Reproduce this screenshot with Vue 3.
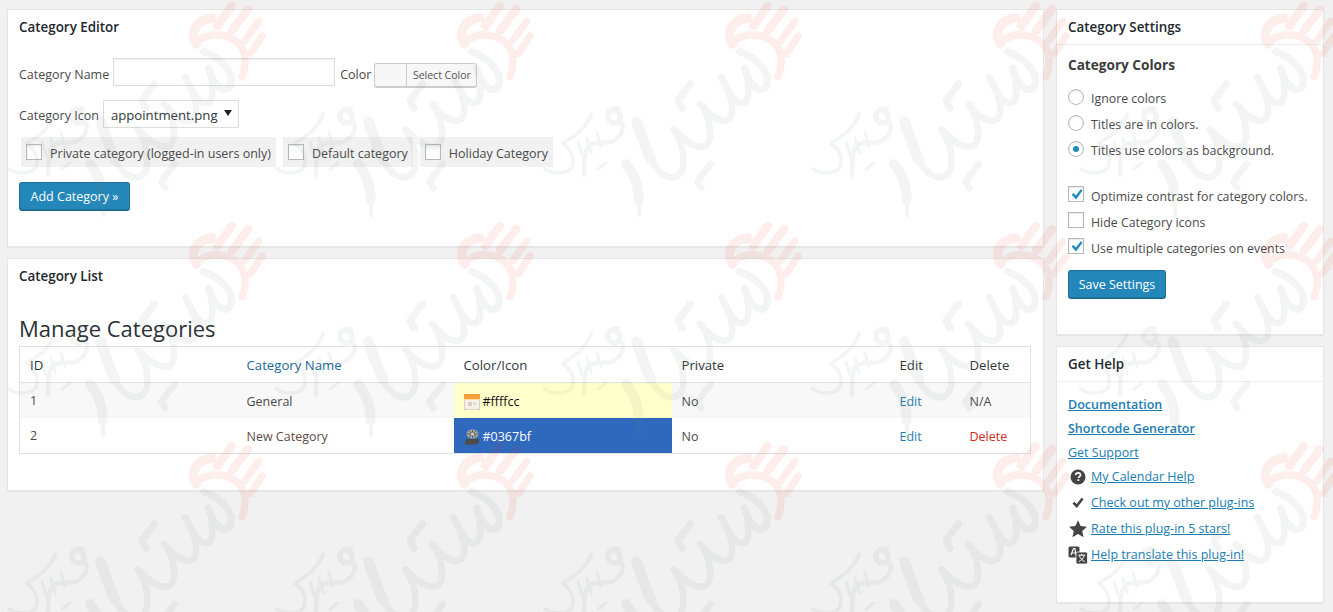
<script setup>
const radios = [
  { label: 'Ignore colors', on: false },
  { label: 'Titles are in colors.', on: false },
  { label: 'Titles use colors as background.', on: true },
];

const options = [
  { label: 'Optimize contrast for category colors.', on: true },
  { label: 'Hide Category icons', on: false },
  { label: 'Use multiple categories on events', on: true },
];

const flags = ['Private category (logged-in users only)', 'Default category', 'Holiday Category'];
</script>

<template>
  <div class="page">
    <main class="main-col">
      <section class="panel editor">
        <h2 class="bare-title">Category Editor</h2>
        <div class="row name-row">
          <label class="field-label">Category Name</label>
          <input class="text-input" type="text" />
          <label class="field-label color-label">Color</label>
          <span class="color-btn"><span class="swatch"></span><span class="pick">Select Color</span></span>
        </div>
        <div class="row icon-row">
          <label class="icon-label">Category Icon</label>
          <span class="select-wrap">
            <select class="icon-select">
              <option>appointment.png</option>
            </select>
          </span>
        </div>
        <div class="flags">
          <label v-for="flag in flags" :key="flag" class="flag">
            <span class="box"></span>
            <span>{{ flag }}</span>
          </label>
        </div>
        <button class="wp-btn add-btn">Add Category »</button>
      </section>

      <section class="panel list">
        <h2 class="bare-title">Category List</h2>
        <h1 class="manage">Manage Categories</h1>
        <table class="cats">
          <thead>
            <tr>
              <th class="c-id">ID</th>
              <th class="c-name"><a>Category Name</a></th>
              <th class="c-color">Color/Icon</th>
              <th class="c-private">Private</th>
              <th class="c-edit">Edit</th>
              <th class="c-del">Delete</th>
            </tr>
          </thead>
          <tbody>
            <tr class="odd">
              <td class="id-cell">1</td>
              <td class="name-cell">General</td>
              <td class="light-cell">
                <span class="color-wrap">
                  <svg width="16" height="16" viewBox="0 0 16 16">
                    <rect x="0.5" y="0.5" width="15" height="15" fill="#f6f1e8" stroke="#d8d2c6" />
                    <rect x="0" y="0" width="16" height="5" fill="#f5a13c" />
                    <rect x="0" y="5" width="16" height="1" fill="#fbd9a6" />
                    <rect x="4" y="8" width="4" height="4" fill="#e8c8c0" />
                    <rect x="9" y="8" width="3" height="3" fill="#d9dde6" />
                  </svg>
                  #ffffcc
                </span>
              </td>
              <td>No</td>
              <td><a class="edit">Edit</a></td>
              <td>N/A</td>
            </tr>
            <tr>
              <td class="id-cell">2</td>
              <td class="name-cell new-cat">New Category</td>
              <td class="blue-cell">
                <span class="color-wrap">
                  <svg width="16" height="16" viewBox="0 0 16 16">
                    <path d="M0.500 15.500l1.500-5.500h13v2.500l-2 3z" fill="#4e4c48" />
                    <ellipse cx="8.500" cy="5" rx="6" ry="4.500" fill="#a9a9a4" />
                    <path d="M8.500 1v8M3 5h11M5 2l7 6M12 2L5 8" stroke="#5a5a56" stroke-width="1" />
                    <circle cx="8.500" cy="5" r="1.500" fill="#d2d2cc" />
                  </svg>
                  #0367bf
                </span>
              </td>
              <td>No</td>
              <td><a class="edit">Edit</a></td>
              <td><a class="del">Delete</a></td>
            </tr>
          </tbody>
        </table>
      </section>
    </main>

    <aside class="side-col">
      <section class="panel settings">
        <h2 class="side-title">Category Settings</h2>
        <div class="side-body">
          <h3 class="sub-title">Category Colors</h3>
          <ul class="radio-list">
            <li v-for="r in radios" :key="r.label">
              <span class="radio" :class="{ on: r.on }"></span>
              <span>{{ r.label }}</span>
            </li>
          </ul>
          <ul class="check-list">
            <li v-for="o in options" :key="o.label">
              <span class="box">
                <svg v-if="o.on" width="16" height="16" viewBox="0 0 16 16">
                  <path d="M2.600 7.600l1.700-1.700 2.500 2.500 5-6.200 1.800 1.400-6.600 8.800z" fill="#1e8cbe" />
                </svg>
              </span>
              <span>{{ o.label }}</span>
            </li>
          </ul>
          <button class="wp-btn save-btn">Save Settings</button>
        </div>
      </section>

      <section class="panel help">
        <h2 class="side-title">Get Help</h2>
        <div class="side-body help-body">
          <a class="strong">Documentation</a>
          <a class="strong">Shortcode Generator</a>
          <a>Get Support</a>
          <div class="help-links">
            <div class="help-row">
              <svg width="20" height="20" viewBox="0 0 20 20">
                <circle cx="10" cy="10" r="7.500" fill="#444" />
                <path d="M7.600 8.100c.1-1.500 1.100-2.200 2.500-2.200s2.400.8 2.400 2c0 1.700-2 1.600-2 3.200" fill="none" stroke="#fff" stroke-width="1.700" />
                <rect x="9.500" y="12.200" width="1.800" height="1.800" fill="#fff" />
              </svg>
              <a>My Calendar Help</a>
            </div>
            <div class="help-row">
              <svg width="20" height="20" viewBox="0 0 20 20">
                <path d="M4.500 10.500l1.800-1.800 2.300 2.300 5-6.300 2 1.500-6.800 8.800z" fill="#444" />
              </svg>
              <a>Check out my other plug-ins</a>
            </div>
            <div class="help-row">
              <svg width="20" height="20" viewBox="0 0 20 20">
                <path d="M10 1.200l2.600 5.900 6.400.6-4.800 4.300 1.400 6.300L10 15.100l-5.600 3.200 1.400-6.300L1 7.700l6.400-.6z" fill="#444" />
              </svg>
              <a>Rate this plug-in 5 stars!</a>
            </div>
            <div class="help-row">
              <svg width="20" height="20" viewBox="0 0 20 20">
                <rect x="0.500" y="1.500" width="11" height="11" rx="1.500" fill="#444" />
                <path d="M3 10l2.500-6.500h1.400L8 10M3.900 8h3.400" fill="none" stroke="#fff" stroke-width="1.200" />
                <rect x="8" y="7" width="11.500" height="12" rx="1.500" fill="#444" stroke="#fff" stroke-width="0.800" />
                <path d="M10.300 10.200h7M13.800 8.800v1.400M11.300 10.600c1 3 3.400 5 5.500 6M16.300 10.600c-1 3-3.400 5-5.500 6" fill="none" stroke="#fff" stroke-width="1" />
              </svg>
              <a>Help translate this plug-in!</a>
            </div>
          </div>
        </div>
      </section>
    </aside>

    <svg class="watermark" width="1333" height="612" aria-hidden="true">
      <defs>
        <pattern id="wm" x="5" y="0" width="268" height="220" patternUnits="userSpaceOnUse">
          <g transform="translate(-69 0) scale(0.3333)" opacity="0.085" fill="none" stroke="#6e8278" stroke-linecap="round" stroke-linejoin="round">
            <path stroke-width="22" d="M803 155C850 170 895 215 885 252C875 282 838 272 818 205" />
            <path stroke-width="20" d="M818 205C838 270 832 332 792 302C772 286 758 252 748 232" />
            <path stroke-width="20" d="M752 240C792 310 790 368 750 362C722 356 702 332 684 312" />
            <path stroke-width="22" d="M655 252L618 302L630 324" />
            <path stroke-width="20" d="M690 315C722 370 722 438 692 440C652 442 624 405 604 388" />
            <path stroke-width="20" d="M606 392C642 442 648 528 602 532C572 532 552 510 536 478" />
            <path stroke-width="32" d="M536 478C520 440 505 400 494 365" />
            <path stroke-width="30" d="M462 492C490 525 500 560 500 600" />
            <path stroke-width="13" d="M500 600L502 645" />
            <path stroke-width="20" d="M716 492L676 545L688 564" />
            <path stroke-width="11" d="M358 342C338 390 305 410 272 430C296 448 310 472 300 502C285 526 240 522 218 506" />
            <path stroke-width="17" d="M438 328C410 322 395 352 420 368C448 378 452 340 430 332" />
            <path stroke-width="13" d="M452 372C456 402 432 430 395 428C372 426 350 430 342 450C336 480 336 505 336 525" />
            <path stroke-width="9" d="M375 398L387 440M345 414L358 460M318 426L332 470" />
            <path stroke-width="9" d="M402 488L378 508" />
          </g>
          <g transform="translate(175 0) scale(0.3333)" opacity="0.09" fill="none" stroke="#e63220" stroke-linecap="round" stroke-linejoin="round">
            <path stroke-width="26" d="M112 78L155 18" />
            <path stroke-width="26" d="M156 92L204 28" />
            <path stroke-width="22" d="M194 122L236 64" />
            <path stroke-width="22" d="M212 160L246 108" />
            <path stroke-width="28" d="M96 54C50 58 26 98 50 132" />
            <path stroke-width="22" d="M62 118C112 88 178 112 192 158" />
            <path stroke-width="22" d="M192 158C200 190 194 212 186 230" />
          </g>
        </pattern>
      </defs>
      <rect width="1333" height="612" fill="url(#wm)" />
    </svg>
  </div>
</template>

<style>
html,
body {
  margin: 0;
  background: #f1f1f1;
}
</style>

<style scoped>
.page {
  position: relative;
  display: flex;
  gap: 12px;
  width: 1333px;
  height: 612px;
  box-sizing: border-box;
  padding: 9px 9px 0 7px;
  overflow: hidden;
  background: #f1f1f1;
  font-family: "Open Sans", "Noto Sans", sans-serif;
  font-size: 12.5px;
  color: #4a4a4a;
}

.main-col {
  display: flex;
  flex-direction: column;
  gap: 11px;
  width: 1037px;
}

.side-col {
  display: flex;
  flex-direction: column;
  gap: 11px;
  width: 268px;
}

.panel {
  box-sizing: border-box;
  background: #fff;
  border: 1px solid #e5e5e5;
  box-shadow: 0 1px 1px rgba(0, 0, 0, 0.04);
}

.editor {
  height: 238px;
  padding: 0 10px;
}

.list {
  height: 233px;
  padding: 0 10px;
}

.settings {
  height: 326px;
}

.help {
  height: 257px;
}

.bare-title {
  margin: 0;
  padding: 8px 0 0 1px;
  font-size: 13.4px;
  line-height: 18px;
  font-weight: 600;
  color: #23282d;
}

.row {
  display: flex;
  align-items: center;
}

.name-row {
  margin-top: 22px;
  margin-left: 1px;
  height: 28px;
}

.icon-row {
  margin-top: 14px;
  margin-left: 1px;
  height: 28px;
}

.field-label {
  padding-top: 4px;
}

.icon-label {
  padding-top: 2px;
}

.text-input {
  box-sizing: border-box;
  width: 222px;
  height: 28px;
  margin: 0 5px 0 4px;
  padding: 0;
  background: #fff;
  border: 1px solid #ddd;
  box-shadow: inset 0 1px 2px rgba(0, 0, 0, 0.07);
}

.color-label {
  margin-right: 3px;
}

.color-btn {
  display: flex;
  box-sizing: border-box;
  width: 103px;
  height: 25px;
  margin-top: 7px;
  background: #f7f7f7;
  border: 1px solid #ccc;
  border-bottom-width: 2px;
  border-radius: 3px;
}

.swatch {
  width: 31px;
  border-right: 1px solid #ccc;
}

.pick {
  flex: 1;
  text-align: center;
  font-size: 10.5px;
  line-height: 22px;
  color: #555;
}

.select-wrap {
  position: relative;
  display: block;
  width: 136px;
  height: 28px;
  margin-left: 4px;
}

.select-wrap::after {
  content: "";
  position: absolute;
  right: 7px;
  top: 10px;
  border-left: 4px solid transparent;
  border-right: 4px solid transparent;
  border-top: 6px solid #222;
}

.icon-select {
  appearance: none;
  box-sizing: border-box;
  width: 136px;
  height: 28px;
  padding: 2px 0 0 7px;
  background: #fff;
  border: 1px solid #ddd;
  border-radius: 0;
  font-family: inherit;
  font-size: 13.2px;
  color: #32373c;
}

.flags {
  display: flex;
  gap: 7px;
  margin: 9px 0 0 3px;
}

.flag {
  display: flex;
  gap: 8px;
  height: 30px;
  padding: 0 5px;
  background: #f1f1f1;
  line-height: 33px;
}

.box {
  flex: none;
  box-sizing: border-box;
  display: block;
  width: 16px;
  height: 16px;
  background: #fff;
  border: 1px solid #b4b9be;
  box-shadow: inset 0 1px 2px rgba(0, 0, 0, 0.1);
}

.flag .box {
  margin-top: 7px;
}

.wp-btn {
  display: block;
  box-sizing: border-box;
  height: 29px;
  padding: 0;
  background: #2487b9;
  border: 1px solid #1b6f99;
  border-bottom-width: 2px;
  border-radius: 3px;
  font-family: inherit;
  font-size: 12.5px;
  color: #fff;
}

.add-btn {
  width: 111px;
  margin-top: 15px;
  margin-left: 1px;
}

.save-btn {
  width: 98px;
  margin-top: 6px;
}

.manage {
  margin: 29px 0 0 1px;
  font-size: 22px;
  line-height: 28px;
  font-weight: 400;
  color: #2c3136;
}

.cats {
  box-sizing: border-box;
  width: 1012px;
  height: 108px;
  margin: 4px 0 0 1px;
  table-layout: fixed;
  border-collapse: collapse;
  border: 1px solid #e1e1e1;
}

.cats th,
.cats td {
  box-sizing: border-box;
  padding: 2px 0 0 10px;
  height: 35px;
  text-align: left;
  font-weight: 400;
}

.cats th {
  height: 36px;
  padding-top: 0;
  border-bottom: 1px solid #e1e1e1;
  font-size: 13.2px;
  color: #32373c;
}

.c-id { width: 216px; }
.c-name { width: 218px; }
.c-color { width: 218px; }
.c-private { width: 218px; }
.c-edit { width: 70px; }

.cats .c-name,
.cats .name-cell {
  padding-left: 11px;
}

.c-name a {
  color: #21699b;
}

.odd td {
  background: #f8f8f8;
}

.cats .id-cell {
  padding-bottom: 2px;
}

.new-cat {
  color: #5f4d48;
}

.cats .light-cell {
  background: #ffffcc;
  color: #111;
}

.cats .blue-cell {
  background: #2f69bd;
  color: #fff;
}

.color-wrap {
  display: flex;
  align-items: center;
  gap: 3px;
}

.edit {
  color: #1f7fb3;
}

.del {
  color: #cf2c17;
}

.side-title {
  box-sizing: border-box;
  height: 35px;
  margin: 0;
  padding: 8px 11px 0;
  border-bottom: 1px solid #eee;
  font-size: 13.4px;
  line-height: 18px;
  font-weight: 600;
  color: #23282d;
}

.side-body {
  padding: 0 11px;
}

.sub-title {
  margin: 11px 0 0;
  font-size: 13.6px;
  line-height: 18px;
  font-weight: 700;
  color: #3d3d3d;
}

.radio-list,
.check-list {
  margin: 0;
  padding: 0;
  list-style: none;
  font-size: 12.35px;
}

.radio-list {
  margin-top: 15px;
}

.radio-list li,
.check-list li {
  display: flex;
  gap: 7px;
  height: 26px;
  line-height: 19px;
}

.check-list li {
  line-height: 21px;
}

.check-list {
  margin-top: 19px;
}

.radio {
  position: relative;
  box-sizing: border-box;
  flex: none;
  width: 16px;
  height: 16px;
  background: #fff;
  border: 1px solid #b4b9be;
  border-radius: 50%;
  box-shadow: inset 0 1px 2px rgba(0, 0, 0, 0.1);
}

.radio.on::after {
  content: "";
  position: absolute;
  left: 4px;
  top: 4px;
  width: 6px;
  height: 6px;
  border-radius: 50%;
  background: #1e8cbe;
}

.help-body {
  display: flex;
  flex-direction: column;
  align-items: flex-start;
  padding-top: 11px;
}

.help-body a {
  color: #1a7db3;
  text-decoration: underline;
  line-height: 24px;
}

.help-body .strong {
  font-weight: 600;
}

.help-links {
  display: flex;
  flex-direction: column;
  margin-top: -1px;
}

.help-row {
  display: flex;
  align-items: center;
  gap: 3px;
  height: 26px;
}

.watermark {
  position: absolute;
  left: 0;
  top: 0;
  pointer-events: none;
  filter: blur(0.5px);
}
</style>
